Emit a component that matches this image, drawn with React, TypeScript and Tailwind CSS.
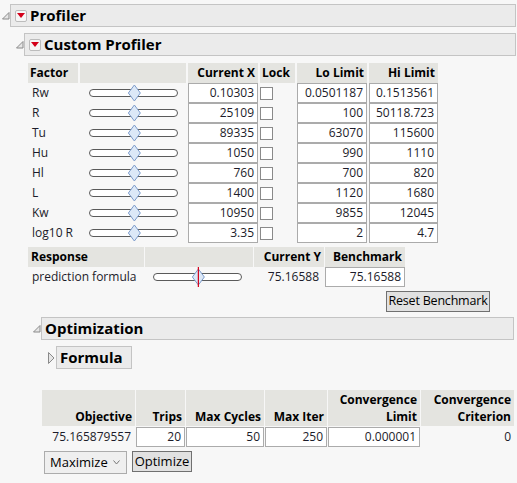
import React from 'react'

const font = "font-['Segoe_UI','Open_Sans',sans-serif]"

const factors = [
  ['Rw', '0.10303', '0.0501187', '0.1513561'],
  ['R', '25109', '100', '50118.723'],
  ['Tu', '89335', '63070', '115600'],
  ['Hu', '1050', '990', '1110'],
  ['Hl', '760', '700', '820'],
  ['L', '1400', '1120', '1680'],
  ['Kw', '10950', '9855', '12045'],
  ['log10 R', '3.35', '2', '4.7'],
]

function OpenTri() {
  return (
    <svg width="8" height="8" viewBox="0 0 8 8" className="shrink-0">
      <polygon points="7,0.5 7,7 0.5,7" fill="#e6e6e6" stroke="#8a8a8a" strokeWidth="1" />
    </svg>
  )
}

function ClosedTri() {
  return (
    <svg width="7" height="12" viewBox="0 0 7 12" className="shrink-0">
      <polygon points="0.5,0.5 6,6 0.5,11.5" fill="#e6e6e6" stroke="#8a8a8a" strokeWidth="1" />
    </svg>
  )
}

function RedMenu() {
  return (
    <span className="flex h-[12px] w-[12px] shrink-0 items-center justify-center rounded-[2px] border border-[#bcbcbc] bg-[#f6f6f6]">
      <svg width="8" height="5" viewBox="0 0 8 5">
        <polygon points="0,0 8,0 4,5" fill="#d4001a" />
      </svg>
    </span>
  )
}

function Slider({ width = 89, pos = 0.5, red = false }: { width?: number; pos?: number; red?: boolean }) {
  const cx = 1 + (width - 2) * pos
  return (
    <svg width={width} height="20" viewBox={`0 0 ${width} 20`} className="shrink-0">
      <rect x="0.5" y="6.5" width={width - 1} height="7" rx="3.5" fill="#fff" stroke="#5a5a5a" />
      <polygon
        points={`${cx},2 ${cx + 6},10 ${cx},18 ${cx - 6},10`}
        fill="#dce8f7"
        stroke="#7d9ccb"
      />
      {red && <line x1={cx} y1="0" x2={cx} y2="20" stroke="#d4001a" strokeWidth="1.2" />}
    </svg>
  )
}

function Cell({ w, children, className = '' }: { w: string; children?: React.ReactNode; className?: string }) {
  return (
    <div className={`${w} flex h-[20px] shrink-0 items-center justify-end border border-[#ababab] bg-white pr-[3px] ${className}`}>
      {children}
    </div>
  )
}

function Head({ w, children, className = '' }: { w: string; children?: React.ReactNode; className?: string }) {
  return (
    <div className={`${w} flex h-[20px] shrink-0 items-center bg-[#e4e4e0] font-bold text-black ${className}`}>
      {children}
    </div>
  )
}

function Check() {
  return <span className="block h-[13px] w-[13px] border border-[#8a8a8a] bg-white" />
}

export default function App() {
  return (
    <div className={`${font} min-h-screen w-[517px] overflow-hidden bg-[#f7f7f7] pt-[4px] text-[12px] text-[#1c1c2a]`}>
      {/* Profiler */}
      <div className="flex items-center pl-[2px] pr-[1px]">
        <OpenTri />
        <div className="flex h-[23px] flex-1 items-center gap-[3px] border border-[#c4c4c4] bg-[#ebebeb] pl-[4px] text-[15px] font-bold text-black">
          <RedMenu />
          Profiler
        </div>
      </div>

      {/* Custom Profiler */}
      <div className="mt-[6px] flex items-center pl-[16px] pr-[1px]">
        <OpenTri />
        <div className="flex h-[23px] flex-1 items-center gap-[3px] border border-[#c4c4c4] bg-[#ebebeb] pl-[4px] text-[15px] font-bold text-black">
          <RedMenu />
          Custom Profiler
        </div>
      </div>

      <div className="pl-[28px]">
        {/* factor table */}
        <div className="mt-[7px] flex gap-[2px]">
          <Head w="w-[50px]" className="pl-[2px]">Factor</Head>
          <Head w="w-[106px]" />
          <Head w="w-[70px]" className="justify-end pr-[3px]">Current X</Head>
          <Head w="w-[35px]" className="pl-[2px]">Lock</Head>
          <Head w="w-[70px]" className="justify-end pr-[3px]">Lo Limit</Head>
          <Head w="w-[69px]" className="justify-end pr-[3px]">Hi Limit</Head>
        </div>
        {factors.map(([name, cur, lo, hi]) => (
          <div key={name} className="flex h-[20px] items-center gap-[2px]">
            <div className="w-[50px] shrink-0 whitespace-nowrap pl-[4px]">{name}</div>
            <div className="flex w-[106px] shrink-0 pl-[9px]">
              <Slider pos={0.51} />
            </div>
            <Cell w="w-[70px]">{cur}</Cell>
            <div className="flex w-[35px] shrink-0 items-center">
              <Check />
            </div>
            <Cell w="w-[70px]">{lo}</Cell>
            <Cell w="w-[69px]">{hi}</Cell>
          </div>
        ))}

        {/* response */}
        <div className="mt-[4px] flex gap-px">
          <Head w="w-[116px]" className="pl-[3px]">Response</Head>
          <Head w="w-[108px]" />
          <Head w="w-[70px]" className="justify-end pr-[3px]">Current Y</Head>
          <Head w="w-[80px]" className="justify-end pr-[3px]">Benchmark</Head>
        </div>
        <div className="flex h-[20px] items-center gap-px">
          <div className="w-[116px] shrink-0 whitespace-nowrap pl-[4px]">prediction formula</div>
          <div className="flex w-[108px] shrink-0 pl-[8px]">
            <Slider pos={0.51} red />
          </div>
          <div className="w-[70px] shrink-0 pr-[5px] text-right">75.16588</div>
          <Cell w="w-[80px]">75.16588</Cell>
        </div>
        <div className="mt-[4px] pl-[358px]">
          <button className="flex h-[21px] w-[104px] items-center justify-center whitespace-nowrap border border-[#707070] bg-[#e1e1e1] text-[12.5px] tracking-[-0.2px] text-black">
            Reset Benchmark
          </button>
        </div>
      </div>

      {/* Optimization */}
      <div className="mt-[5px] flex items-center pl-[33px] pr-[3px]">
        <OpenTri />
        <div className="flex h-[23px] flex-1 items-center border border-[#c4c4c4] bg-[#ebebeb] pl-[3px] text-[15px] font-bold text-black">
          Optimization
        </div>
      </div>

      <div className="mt-[6px] flex items-center gap-[1px] pl-[48px]">
        <ClosedTri />
        <div className="flex h-[23px] w-[76px] items-center border border-[#c4c4c4] bg-[#ebebeb] pl-[3px] text-[15px] font-bold text-black">
          Formula
        </div>
      </div>

      <div className="pl-[42px]">
        <div className="mt-[21px] flex gap-px">
          {[
            ['w-[93px]', 'Objective'],
            ['w-[49px]', 'Trips'],
            ['w-[78px]', 'Max Cycles'],
            ['w-[62px]', 'Max Iter'],
            ['w-[92px]', 'Convergence\nLimit'],
            ['w-[93px]', 'Convergence\nCriterion'],
          ].map(([w, t]) => (
            <div
              key={t}
              className={`${w} flex h-[36px] shrink-0 items-end justify-end whitespace-pre-line bg-[#e4e4e0] pb-[1px] pr-[3px] text-right font-bold leading-[17px] text-black`}
            >
              {t}
            </div>
          ))}
        </div>
        <div className="mt-px flex h-[20px] items-center gap-px">
          <div className="w-[93px] shrink-0 pr-[4px] text-right">75.165879557</div>
          <Cell w="w-[49px]">20</Cell>
          <Cell w="w-[78px]">50</Cell>
          <Cell w="w-[62px]">250</Cell>
          <Cell w="w-[92px]">0.000001</Cell>
          <div className="w-[93px] shrink-0 pr-[3px] text-right">0</div>
        </div>
        <div className="mt-[4px] flex items-start gap-[5px] pl-[2px]">
          <div className="flex h-[23px] w-[83px] items-center justify-between border border-[#acacac] bg-[#efefef] pl-[5px] pr-[6px] text-[13px] text-black">
            Maximize
            <svg width="7" height="5" viewBox="0 0 7 5">
              <polyline points="0.5,0.5 3.5,4 6.5,0.5" fill="none" stroke="#777" strokeWidth="1" />
            </svg>
          </div>
          <button className="flex h-[21px] w-[60px] items-center justify-center border border-[#707070] bg-[#e1e1e1] text-[13px] text-black">
            Optimize
          </button>
        </div>
      </div>
    </div>
  )
}
